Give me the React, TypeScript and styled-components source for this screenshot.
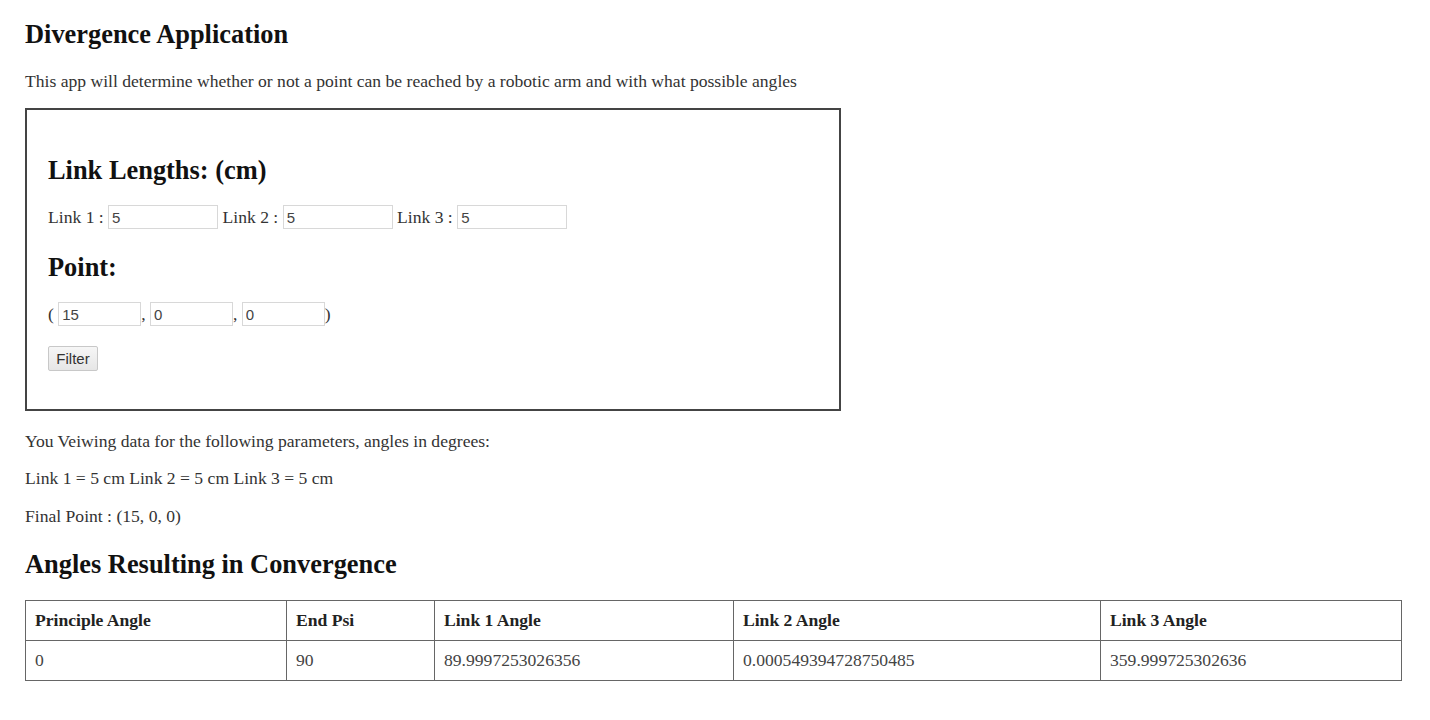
import styled, { createGlobalStyle } from 'styled-components';

const GlobalStyle = createGlobalStyle`
  body {
    margin: 0;
    background: #fff;
    font-family: "Liberation Serif", "Times New Roman", serif;
    color: #333;
  }
`;

const Page = styled.div`
  padding: 19px 25px 30px 25px;
  display: flex;
  flex-direction: column;
  align-items: flex-start;
`;

const Title = styled.h2<{ $gap?: number }>`
  margin: ${p => p.$gap ?? 0}px 0 0 0;
  font-size: 26.4px;
  line-height: 30px;
  font-weight: bold;
  color: #111;
`;

const Text = styled.p<{ $gap: number }>`
  margin: ${p => p.$gap}px 0 0 0;
  font-size: 17.6px;
  line-height: 20px;
`;

const FormBox = styled.div`
  margin-top: 17px;
  width: 770px;
  border: 2px solid #444;
  padding: 45px 21px 38px 21px;
  display: flex;
  flex-direction: column;
  align-items: flex-start;
`;

const Row = styled.div<{ $gap: number }>`
  margin-top: ${p => p.$gap}px;
  display: flex;
  align-items: center;
  height: 24px;
  font-size: 17.6px;
  white-space: pre;
`;

const Field = styled.input<{ $w: number }>`
  box-sizing: border-box;
  width: ${p => p.$w}px;
  height: 24px;
  border: 1px solid #d8d8d8;
  padding: 0 3px;
  font-family: "Liberation Sans", Arial, sans-serif;
  font-size: 15px;
  color: #444;
  outline: none;
`;

const FilterButton = styled.button`
  margin-top: 20px;
  box-sizing: border-box;
  width: 50px;
  height: 25px;
  border: 1px solid #c8c8c8;
  border-radius: 2px;
  background: linear-gradient(#f6f6f6, #e6e6e6);
  font-family: "Liberation Sans", Arial, sans-serif;
  font-size: 15px;
  color: #333;
  padding: 0;
`;

const Table = styled.table`
  margin-top: 21px;
  width: 1376px;
  border-collapse: collapse;
  table-layout: fixed;
  font-size: 17.6px;

  th, td {
    border: 1px solid #666;
    padding: 0 9px;
    text-align: left;
    height: 39px;
  }

  th {
    font-weight: bold;
    color: #222;
  }

  td {
    color: #444;
  }
`;

const columns = [
  { title: 'Principle Angle', width: 261 },
  { title: 'End Psi', width: 148 },
  { title: 'Link 1 Angle', width: 299 },
  { title: 'Link 2 Angle', width: 367 },
  { title: 'Link 3 Angle', width: 301 },
];

const rows = [['0', '90', '89.9997253026356', '0.000549394728750485', '359.999725302636']];

const App = () => {
  return (
    <>
      <GlobalStyle />
      <Page>
        <Title>Divergence Application</Title>
        <Text $gap={22}>
          This app will determine whether or not a point can be reached by a robotic arm and with what possible angles
        </Text>

        <FormBox>
          <Title>Link Lengths: (cm)</Title>
          <Row $gap={20}>
            Link 1 : <Field $w={110} defaultValue="5" /> Link 2 : <Field $w={110} defaultValue="5" /> Link 3 : <Field $w={110} defaultValue="5" />
          </Row>
          <Title $gap={23}>Point:</Title>
          <Row $gap={20}>
            ( <Field $w={83} defaultValue="15" />, <Field $w={83} defaultValue="0" />, <Field $w={83} defaultValue="0" />)
          </Row>
          <FilterButton>Filter</FilterButton>
        </FormBox>

        <Text $gap={20}>You Veiwing data for the following parameters, angles in degrees:</Text>
        <Text $gap={17}>Link 1 = 5 cm Link 2 = 5 cm Link 3 = 5 cm</Text>
        <Text $gap={18}>Final Point : (15, 0, 0)</Text>

        <Title $gap={23}>Angles Resulting in Convergence</Title>
        <Table>
          <colgroup>
            {columns.map(c => (
              <col key={c.title} style={{ width: c.width }} />
            ))}
          </colgroup>
          <thead>
            <tr>
              {columns.map(c => (
                <th key={c.title}>{c.title}</th>
              ))}
            </tr>
          </thead>
          <tbody>
            {rows.map(r => (
              <tr key={r.join('-')}>
                {r.map((v, i) => (
                  <td key={i}>{v}</td>
                ))}
              </tr>
            ))}
          </tbody>
        </Table>
      </Page>
    </>
  );
};

export default App;
